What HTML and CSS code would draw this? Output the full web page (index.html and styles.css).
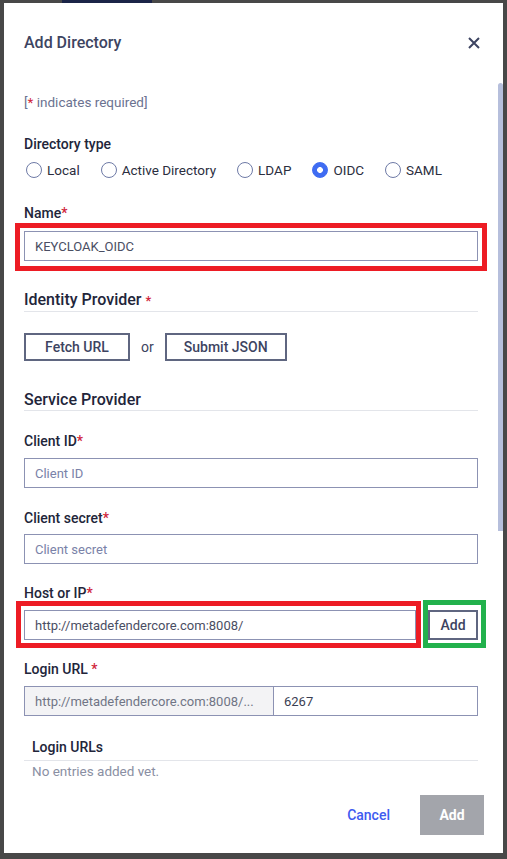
FILE: index.html
```html
<!DOCTYPE html>
<html lang="en">
<head>
<meta charset="utf-8">
<title>Add Directory</title>
<link rel="stylesheet" href="styles.css">
</head>
<body>
<div class="topstrip"><div class="navy"></div></div>
<div class="modal">
  <div class="header">
    <div class="title">Add Directory</div>
    <svg class="close" width="12" height="12" viewBox="0 0 12 12"><path d="M1 1 L11 11 M11 1 L1 11" stroke="#3d4461" stroke-width="2" fill="none"/></svg>
  </div>
  <div class="scroll">
    <div class="content">
      <div class="note">[<span class="req">*</span> indicates required]</div>

      <div class="label m24">Directory type</div>
      <div class="radios">
        <div class="ropt"><span class="radio"></span><span>Local</span></div>
        <div class="ropt"><span class="radio"></span><span>Active Directory</span></div>
        <div class="ropt"><span class="radio"></span><span>LDAP</span></div>
        <div class="ropt"><span class="radio on"></span><span>OIDC</span></div>
        <div class="ropt"><span class="radio"></span><span>SAML</span></div>
      </div>

      <div class="label m24">Name<span class="req">*</span></div>
      <div class="mark-red name-mark">
        <div class="input value">KEYCLOAK_OIDC</div>
      </div>

      <div class="section sec-idp">Identity Provider <span class="req small">*</span></div>
      <div class="btnrow">
        <div class="obtn fetch">Fetch URL</div>
        <span class="or">or</span>
        <div class="obtn submit">Submit JSON</div>
      </div>

      <div class="section sec-sp">Service Provider</div>

      <div class="label m21">Client ID<span class="req">*</span></div>
      <div class="input placeholder m8">Client ID</div>

      <div class="label m21">Client secret<span class="req">*</span></div>
      <div class="input placeholder m7">Client secret</div>

      <div class="label m20">Host or IP<span class="req">*</span></div>
      <div class="hostrow">
        <div class="mark-red host-mark">
          <div class="input value">http://metadefendercore.com:8008/</div>
        </div>
        <div class="mark-green">
          <div class="addbtn">Add</div>
        </div>
      </div>

      <div class="label m12">Login URL <span class="req">*</span></div>
      <div class="group">
        <div class="prefix">http://metadefendercore.com:8008/...</div>
        <div class="suffix">6267</div>
      </div>

      <div class="listhead">Login URLs</div>
      <div class="empty">No entries added yet.</div>
      <div class="spacer"></div>
    </div>
    <div class="scrollbar"><div class="thumb"></div></div>
  </div>
  <div class="footer">
    <span class="cancel">Cancel</span>
    <div class="primary">Add</div>
  </div>
</div>
</body>
</html>
```

FILE: styles.css
```css
* { box-sizing: border-box; }
html, body { margin: 0; padding: 0; }
body {
  width: 507px;
  height: 859px;
  background: #484848;
  font-family: Roboto, "Liberation Sans", Arial, sans-serif;
  overflow: hidden;
}
.topstrip { height: 3px; display: flex; }
.navy { margin-left: 62px; width: 90px; height: 3px; background: #1b2447; }

.modal {
  margin: 0 4px;
  width: 499px;
  height: 850px;
  background: #fff;
  display: flex;
  flex-direction: column;
}
.header {
  height: 80px;
  flex: none;
  display: flex;
  align-items: center;
  justify-content: space-between;
  padding: 0 23px 0 20px;
}
.title { font-size: 16px; font-weight: 500; color: #3d4461; line-height: 20px; }
.close { display: block; }

.scroll {
  height: 693px;
  flex: none;
  display: flex;
  align-items: flex-start;
  overflow: hidden;
}
.content {
  flex: 1;
  min-width: 0;
  padding: 10px 20px 0 20px;
  display: flex;
  flex-direction: column;
}
.content > * { flex-shrink: 0; }
.scrollbar { width: 5px; flex: none; }
.thumb { height: 448px; background: #b6bfdc; border-radius: 3px 3px 0 0; }

.note { font-size: 13.5px; line-height: 18px; color: #6b7290; }
.req { color: #d0243a; }
.req.small { font-size: 13px; }

.label { font-size: 14px; font-weight: 500; line-height: 18px; color: #22253a; }
.m24 { margin-top: 24px; }
.m21 { margin-top: 21px; }
.m20 { margin-top: 20px; }
.m12 { margin-top: 12px; }
.m8 { margin-top: 8px; }
.m7 { margin-top: 7px; }

.radios { margin-top: 7px; height: 20px; display: flex; align-items: center; gap: 21px; padding-left: 2px; }
.ropt { display: flex; align-items: center; gap: 5px; font-size: 13.5px; color: #2b2e40; }
.radio {
  width: 16px; height: 16px; border-radius: 50%;
  border: 1.5px solid #6e7aa6; background: #fff; flex: none;
}
.radio.on {
  border-color: #3f6cf2;
  background: radial-gradient(circle, #fff 0 2.6px, #3f6cf2 3.2px);
}

.input {
  height: 30px;
  flex-shrink: 0;
  border: 1px solid #8c92b3;
  padding: 0 10px;
  display: flex;
  align-items: center;
  font-size: 13px;
  white-space: nowrap;
  overflow: hidden;
}
.input.value { color: #4a4e63; }
.input.placeholder { color: #7a82a8; }

.mark-red { border: 5px solid #ed1c24; }
.name-mark { margin: 1px -9px 0; padding: 3px 4px 5px 4px; }

.section {
  font-size: 16px; font-weight: 500; color: #22253a;
  line-height: 20px; border-bottom: 1px solid #e3e5ea;
}
.sec-idp { margin-top: 19px; }
.sec-sp { margin-top: 29px; }

.btnrow { margin-top: 21px; display: flex; align-items: center; gap: 11px; }
.obtn {
  height: 28px; border: 2px solid #5f6680;
  display: flex; align-items: center; justify-content: center;
  font-size: 14px; font-weight: 500; color: #3d4461;
}
.fetch { width: 106px; }
.submit { width: 122px; }
.or { font-size: 14px; color: #3d4461; }

.hostrow { margin: -2px -8px 0 -8px; display: flex; align-items: flex-start; gap: 2px; }
.host-mark { flex: 1; min-width: 0; margin-top: 1px; padding: 4px 0 3px 3px; }
.mark-green { border: 5px solid #22b14c; padding: 5px 3px 3px 0; }
.addbtn {
  width: 50px; height: 30px; border: 2px solid #5f6680;
  display: flex; align-items: center; justify-content: center;
  font-size: 14px; font-weight: 500; color: #3d4461;
}

.group { margin-top: 8px; height: 30px; display: flex; border: 1px solid #8c92b3; }
.prefix {
  width: 249px; background: #f3f3f5; border-right: 1px solid #8c92b3;
  padding: 0 8px 0 10px; display: flex; align-items: center;
  font-size: 13px; color: #707585; white-space: nowrap; overflow: hidden;
}
.suffix { flex: 1; padding: 0 10px; display: flex; align-items: center; font-size: 13px; color: #3a3e52; }

.listhead {
  margin-top: 22px; padding: 0 8px 4px; line-height: 18px;
  font-size: 14px; font-weight: 500; color: #22253a;
  border-bottom: 1px solid #e3e5ea;
}
.empty { margin-top: 1px; padding-left: 8px; line-height: 18px; font-size: 13.5px; color: #8a8fa3; }
.spacer { height: 300px; }

.footer {
  height: 77px; flex: none;
  display: flex; justify-content: flex-end; align-items: flex-start;
  padding: 19px 19px 0 0; gap: 30px;
}
.cancel { height: 40px; display: flex; align-items: center; font-size: 14px; font-weight: 500; color: #3e5bf0; }
.primary {
  width: 64px; height: 40px; background: #a3a5ab; color: #fff;
  display: flex; align-items: center; justify-content: center;
  font-size: 14px; font-weight: 700;
}
```
